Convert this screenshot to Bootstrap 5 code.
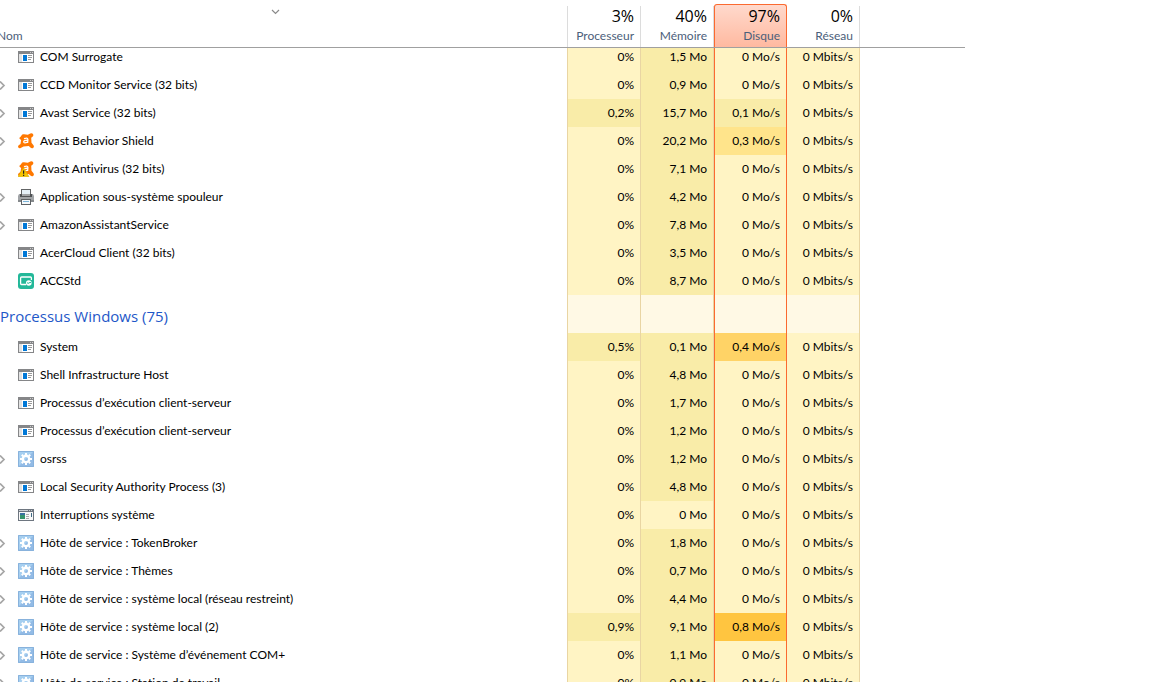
<!DOCTYPE html>
<html lang="fr">
<head>
<meta charset="utf-8">
<meta name="viewport" content="width=device-width, initial-scale=1">
<title>Gestionnaire des tâches</title>
<link rel="stylesheet" href="https://cdn.jsdelivr.net/npm/bootstrap@5.3.0/dist/css/bootstrap.min.css">
<style>
  body { font-family: Lato, "Open Sans", sans-serif; font-size: 12px; line-height: 18px; font-variant-ligatures: none; color: #000; background: #fff; }
  .task-view { padding-right: 187px; }
  .proc { table-layout: fixed; border-collapse: separate; border-spacing: 0; color: #000; }
  .proc th, .proc td { padding: 0; font-weight: 400; white-space: nowrap; }
  .c-metric { width: 73px; }
  .c-rest { width: 105px; }

  /* column headings */
  .proc thead th { height: 48px; border-bottom: 1px solid #a0a0a0; vertical-align: bottom; color: #4c607a; }
  .h-name { padding-bottom: 2px; margin-left: -3px; }
  .sort { height: 18px; padding-right: 17px; }
  .h-box { height: 41px; padding-right: 6px; text-align: right; border-right: 1px solid #dcdcdc; }
  .h-total { display: block; font-family: "Open Sans", sans-serif; font-size: 16px; line-height: 20px; color: #000; }
  .h-label { display: block; line-height: 20px; }
  .h-first { border-left: 1px solid #dcdcdc; margin-left: -1px; }
  .h-hot { height: 43px; padding-top: 1px; border: 1px solid #fb6a30; border-bottom: 0; border-radius: 3px 3px 0 0; background: linear-gradient(#ffd9cc, #ffb9a0); }

  /* process rows */
  .proc tbody tr { height: 28px; }
  .proc tbody > tr > * { vertical-align: middle; }
  .proc tbody tr.scrolled { height: 23px; }
  .proc tbody tr.scrolled > * { vertical-align: top; }
  .proc tbody tr.group { height: 38px; }
  .proc .group-title { font-family: "Open Sans", sans-serif; font-size: 15px; line-height: 20px; color: #1e57c8; padding-top: 4px; }
  .p-name { border-right: 1px solid #e9d5a3; }
  .more { width: 18px; height: 9px; }
  .ico { width: 16px; height: 16px; margin-right: 6px; }
  .val { text-align: right; border-right: 1px solid #e9d5a3; background: #fff4c4; }
  .proc .val { padding-right: 6px; }
  .heat-1 { background: #f9eca8; }
  .heat-2 { background: #ffe48b; }
  .heat-3 { background: #ffd366; }
  .heat-4 { background: #ffc540; }
  .group .val { background: #fff9e5; }
  .hot { border-left: 1px solid #fb6a30; border-right-color: #fb6a30; }
</style>
</head>
<body class="vh-100 overflow-hidden">

<svg class="d-none" aria-hidden="true">
  <symbol id="i-app" viewBox="0 0 16 16">
    <path fill="#858688" d="M0 2h16v12H0z"/>
    <path fill="#fff" d="M1 5h14v8H1z"/>
    <path fill="#e3e3e3" d="M1 5h3v8H1z"/>
    <path fill="#0078d7" d="M5 6h4v6H5z"/>
    <path fill="#999" d="M10 6h4v1h-4zM10 8h4v1h-4zM10 10h3v1h-3z"/>
    <path fill="#ccc" d="M12 3h1v1h-1zM14 3h1v1h-1z"/>
  </symbol>
  <symbol id="i-sys" viewBox="0 0 16 16">
    <path fill="#6e7680" d="M0 2h16v12H0z"/>
    <path fill="#c9ced3" d="M1 3h9v1H1zM11 3h1v1h-1zM13 3h1v1h-1z"/>
    <path fill="#f8f8f8" d="M1 5h14v8H1z"/>
    <path fill="#3a70a0" d="M2 6h5v3H2z"/><path fill="#36936c" d="M2 8h5v4H2z"/>
    <path fill="#aaa" d="M8 7h3v1H8zM8 9h3v1H8zM8 11h3v1H8z"/>
    <path fill="#3e6985" d="M13 6h1v4h-1z"/>
  </symbol>
  <symbol id="i-avast" viewBox="0 0 16 16">
    <path fill="#ff7800" d="M3.500 2.400Q4.200 1 6 1.300l3.800.5L12.300.5Q14.200-.2 15.100 1.200 15.800 2.800 14.500 3.700L13.200 4.800l.3 5 2 2.400q1 1.700-.4 2.800-1.400.8-2.700-.4L10.800 13l-5.300.6-2.800 1.500Q1 15.800.2 14.300-.3 12.800 1 12l1.500-1.100.6-4L1.600 5.700Q1 4.500 2.400 3.900z"/>
    <path fill="none" stroke="#fff" stroke-width="1.300" d="M6 5.700Q9.800 4.300 9.900 6.500L9.600 10M9.800 7.300Q5.600 7 5.700 9 6 10.700 9.500 9.200"/>
  </symbol>
  <symbol id="i-avast-warn" viewBox="0 0 16 16">
    <use href="#i-avast"/>
    <path fill="#f5c400" stroke="#d5a400" stroke-width=".5" d="M5.500 6.500L11 15.700H0z"/>
    <path fill="#222" d="M5 9.500h1.200v3.300H5zM5 13.700h1.200v1.200H5z"/>
  </symbol>
  <symbol id="i-print" viewBox="0 0 16 16">
    <path fill="#626466" d="M3 0h10v5H3z"/><path fill="#e5f0f8" d="M4 1h8v5H4z"/>
    <path fill="#a1a4a7" d="M1 5h14l1 2v6H0V7z"/>
    <path fill="#505356" d="M2 5h2v2h8V5h2v3H2z"/>
    <path fill="#85898c" d="M0 11h16v2H0z"/>
    <path fill="#5e6265" d="M3 10h10v6H3z"/><path fill="#f5f8fa" d="M4 11h8v4H4z"/>
    <path fill="#7bb4d9" d="M5 12h6v1H5z"/>
  </symbol>
  <symbol id="i-acc" viewBox="0 0 16 16">
    <rect width="16" height="16" rx="3" fill="#23b899"/>
    <path fill="none" stroke="#fff" stroke-width="1.300" d="M8 11.500H3.500Q2.600 11.500 2.600 10.500V5q0-1 1-1h8.800q1 0 1 1v2"/>
    <circle cx="10.800" cy="10" r="2.800" fill="#fff"/>
    <path fill="none" stroke="#23b899" d="M9 9.500q1 1.500 2 .5t2-.5"/>
  </symbol>
  <symbol id="i-gear" viewBox="0 0 16 16">
    <path fill="#a6cff0" d="M0 0h16v16H0z"/>
    <path fill="#86addf" d="M16 0v16H0z" opacity=".6"/>
    <path fill="none" stroke="#88b2dc" d="M.5.5h15v15H.5z"/>
    <circle cx="8" cy="8" r="3.200" fill="none" stroke="#fff" stroke-width="2.400"/>
    <path stroke="#fff" stroke-width="2" d="M8 2v2M8 12v2M2 8h2M12 8h2M3.800 3.800l1.400 1.400M10.800 10.800l1.400 1.400M12.200 3.800l-1.400 1.400M5.200 10.800l-1.400 1.400"/>
  </symbol>
  <symbol id="i-more" viewBox="0 0 18 9">
    <path fill="none" stroke="#a6a6a6" stroke-width="1.700" d="M0 .5l4 4-4 4"/>
  </symbol>
</svg>

<main class="task-view">
  <table class="proc w-100">
    <colgroup><col><col class="c-metric"><col class="c-metric"><col class="c-metric"><col class="c-metric"><col class="c-rest"></colgroup>
    <thead>
      <tr>
        <th scope="col">
          <div class="sort d-flex justify-content-center"><svg width="9" height="6" viewBox="0 0 9 6" aria-hidden="true"><path fill="none" stroke="#8a8a8a" stroke-width="1.200" d="M1 1l3.500 3.500L8 1"/></svg></div>
          <div class="h-name">Nom</div>
        </th>
        <th scope="col"><div class="h-box h-first"><span class="h-total">3%</span><span class="h-label">Processeur</span></div></th>
        <th scope="col"><div class="h-box"><span class="h-total">40%</span><span class="h-label">Mémoire</span></div></th>
        <th scope="col"><div class="h-box h-hot"><span class="h-total">97%</span><span class="h-label">Disque</span></div></th>
        <th scope="col"><div class="h-box"><span class="h-total">0%</span><span class="h-label">Réseau</span></div></th>
        <th></th>
      </tr>
    </thead>
    <tbody id="rows"></tbody>
  </table>
</main>

<script>
  // [icon, expandable, name, cpu, memory, disk]
  const apps = [
    ["app", 0, "COM Surrogate", "0", "1,5", "0"],
    ["app", 1, "CCD Monitor Service (32 bits)", "0", "0,9", "0"],
    ["app", 1, "Avast Service (32 bits)", "0,2", "15,7", "0,1"],
    ["avast", 1, "Avast Behavior Shield", "0", "20,2", "0,3"],
    ["avast-warn", 0, "Avast Antivirus (32 bits)", "0", "7,1", "0"],
    ["print", 1, "Application sous-système spouleur", "0", "4,2", "0"],
    ["app", 1, "AmazonAssistantService", "0", "7,8", "0"],
    ["app", 0, "AcerCloud Client (32 bits)", "0", "3,5", "0"],
    ["acc", 0, "ACCStd", "0", "8,7", "0"]
  ];
  const system = [
    ["app", 0, "System", "0,5", "0,1", "0,4"],
    ["app", 0, "Shell Infrastructure Host", "0", "4,8", "0"],
    ["app", 0, "Processus d’exécution client-serveur", "0", "1,7", "0"],
    ["app", 0, "Processus d’exécution client-serveur", "0", "1,2", "0"],
    ["gear", 1, "osrss", "0", "1,2", "0"],
    ["app", 1, "Local Security Authority Process (3)", "0", "4,8", "0"],
    ["sys", 0, "Interruptions système", "0", "0", "0"],
    ["gear", 1, "Hôte de service : TokenBroker", "0", "1,8", "0"],
    ["gear", 1, "Hôte de service : Thèmes", "0", "0,7", "0"],
    ["gear", 1, "Hôte de service : système local (réseau restreint)", "0", "4,4", "0"],
    ["gear", 1, "Hôte de service : système local (2)", "0,9", "9,1", "0,8"],
    ["gear", 1, "Hôte de service : Système d’événement COM+", "0", "1,1", "0"],
    ["gear", 1, "Hôte de service : Station de travail", "0", "0,9", "0"]
  ];
  const diskHeat = { "0,1": "heat-1", "0,3": "heat-2", "0,4": "heat-3", "0,8": "heat-4" };
  const heat = v => v === "0" ? "" : "heat-1";
  const row = ([icon, more, name, cpu, mem, disk], first) => `
    <tr class="${first ? "scrolled" : ""}">
      <th scope="row" class="p-name"><div class="d-flex align-items-center">
        <svg class="more flex-shrink-0" aria-hidden="true">${more ? '<use href="#i-more"/>' : ""}</svg>
        <svg class="ico flex-shrink-0" aria-hidden="true"><use href="#i-${icon}"/></svg>
        <span>${name}</span></div></th>
      <td class="val ${heat(cpu)}">${cpu}%</td>
      <td class="val ${heat(mem)}">${mem} Mo</td>
      <td class="val hot ${diskHeat[disk] || ""}">${disk} Mo/s</td>
      <td class="val">0 Mbits/s</td><td></td>
    </tr>`;
  document.getElementById("rows").innerHTML =
    apps.map((p, i) => row(p, i === 0)).join("") +
    `<tr class="group"><th scope="rowgroup" class="p-name group-title">Processus Windows (75)</th>
      <td class="val"></td><td class="val"></td><td class="val hot"></td><td class="val"></td><td></td></tr>` +
    system.map(p => row(p, false)).join("");
</script>
<script src="https://cdn.jsdelivr.net/npm/bootstrap@5.3.0/dist/js/bootstrap.bundle.min.js"></script>
</body>
</html>
